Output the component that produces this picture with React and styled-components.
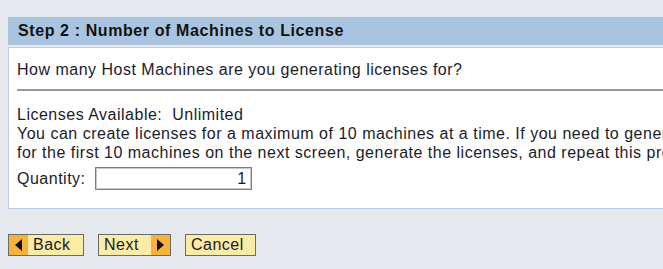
import React from "react";
import styled, { createGlobalStyle } from "styled-components";

const Global = createGlobalStyle`
  html, body { margin: 0; padding: 0; }
  body {
    background: #e5e9ee;
    font-family: "Liberation Sans", Arial, sans-serif;
    color: #1b1b2b;
    overflow: hidden;
    width: 663px;
    height: 269px;
  }
`;

const Page = styled.div`
  padding: 17px 0 0 8px;
  width: 900px;
`;

const Header = styled.div`
  height: 28px;
  background: #a9c4e0;
  display: flex;
  align-items: center;
  padding-left: 10px;
  font-weight: bold;
  font-size: 16px;
  letter-spacing: 0.6px;
  color: #111;
`;

const Panel = styled.div`
  margin-top: 2px;
  background: #fff;
  border: 1px solid #b9cee6;
  border-right: none;
  height: 162px;
  box-sizing: border-box;
  padding: 12px 0 0 8px;
  font-size: 16px;
  letter-spacing: 0.5px;
`;

const Question = styled.div`
  line-height: 20px;
  height: 20px;
`;

const Rule = styled.div`
  margin-top: 9px;
  height: 2px;
  background: #9a9a9a;
`;

const Lines = styled.div`
  margin-top: 14px;
  line-height: 19px;
  white-space: pre;
`;

const QtyRow = styled.div`
  margin-top: 5px;
  display: flex;
  align-items: center;
  gap: 9px;
`;

const QtyInput = styled.div`
  width: 157px;
  height: 23px;
  box-sizing: border-box;
  border: 1px solid #7d7d7d;
  outline: 1px solid #c9c9c9;
  outline-offset: -2px;
  text-align: right;
  padding-right: 4px;
  line-height: 21px;
`;

const Buttons = styled.div`
  margin-top: 25px;
  display: flex;
  gap: 14px;
`;

const Btn = styled.div`
  height: 22px;
  box-sizing: border-box;
  border: 1px solid #6a6a6a;
  background: #faeca5;
  display: flex;
  align-items: stretch;
  font-size: 16px;
  line-height: 20px;
  letter-spacing: 0.5px;
  color: #1b1b2b;
  width: ${(p) => p.$w}px;
`;

const Arrow = styled.span`
  width: 19px;
  flex: none;
  background: #f8b23c;
  display: flex;
  align-items: center;
  justify-content: center;
`;

const Label = styled.span`
  flex: 1;
  padding: 0 ${(p) => p.$pad || 5}px;
  white-space: nowrap;
`;

const Tri = ({ dir }) => (
  <svg width="7" height="12" viewBox="0 0 7 12">
    {dir === "left" ? (
      <polygon points="7,0 7,12 0,6" fill="#111" />
    ) : (
      <polygon points="0,0 0,12 7,6" fill="#111" />
    )}
  </svg>
);

export default function App() {
  return (
    <>
      <Global />
      <Page>
        <Header>Step 2 : Number of Machines to License</Header>
        <Panel>
          <Question>How many Host Machines are you generating licenses for?</Question>
          <Rule />
          <Lines>
            {"Licenses Available:  Unlimited\n"}
            {"You can create licenses for a maximum of 10 machines at a time. If you need to generate more licenses, generate the licenses\n"}
            {"for the first 10 machines on the next screen, generate the licenses, and repeat this process."}
          </Lines>
          <QtyRow>
            <span>Quantity:</span>
            <QtyInput>1</QtyInput>
          </QtyRow>
        </Panel>
        <Buttons>
          <Btn $w={76}>
            <Arrow><Tri dir="left" /></Arrow>
            <Label>Back</Label>
          </Btn>
          <Btn $w={73}>
            <Label>Next</Label>
            <Arrow><Tri dir="right" /></Arrow>
          </Btn>
          <Btn $w={71}>
            <Label>Cancel</Label>
          </Btn>
        </Buttons>
      </Page>
    </>
  );
}
